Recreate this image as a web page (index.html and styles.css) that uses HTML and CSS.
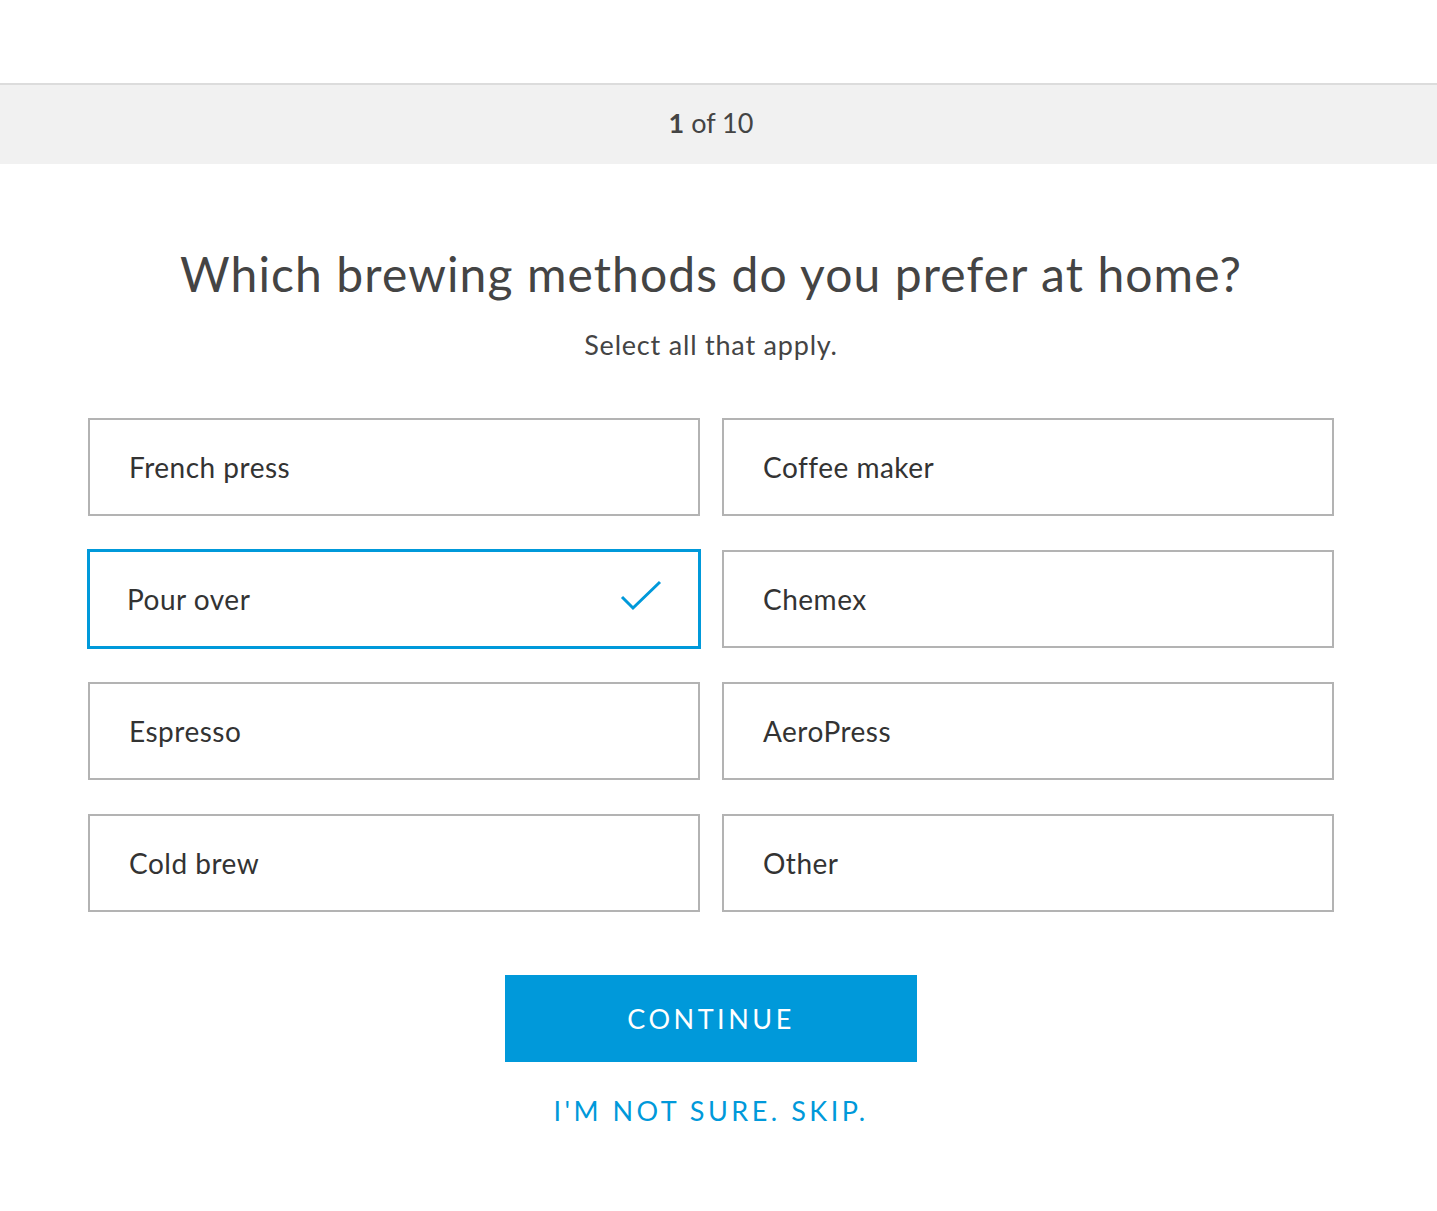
FILE: index.html
```html
<!DOCTYPE html>
<html>
  <head>
    <title>Brewing quiz</title>
    <link rel="stylesheet" href="styles.css">
  </head>
  <body>
    <header class="top"></header>
    <div class="progress">
      <div class="inner"><strong>1</strong> of 10</div>
    </div>

    <main class="quiz">
      <h1>Which brewing methods do you prefer at home?</h1>
      <p class="hint">Select all that apply.</p>

      <div class="options">
        <div class="option">French press</div>
        <div class="option">Coffee maker</div>
        <div class="option selected">
          Pour over
          <svg class="check" width="42" height="32" viewBox="0 0 42 32">
            <path d="M2 17 L13 28 L40 2" fill="none" stroke="#0099da" stroke-width="3"/>
          </svg>
        </div>
        <div class="option">Chemex</div>
        <div class="option">Espresso</div>
        <div class="option">AeroPress</div>
        <div class="option">Cold brew</div>
        <div class="option">Other</div>
      </div>

      <button class="continue">CONTINUE</button>
      <a class="skip" href="#">I'M NOT SURE. SKIP.</a>
    </main>
  </body>
</html>
```

FILE: styles.css
```css
body {
  margin: 0;
  font-family: Lato, "Open Sans", Arial, sans-serif;
  color: #444;
  background: #fff;
}

.top {
  height: 83px;
  border-bottom: 2px solid #dcdcdc;
}

.progress {
  background: #f1f1f1;
  height: 79px;
}

.progress .inner {
  padding-right: 15px;
  text-align: center;
  font-size: 27px;
  line-height: 75px;
  color: #444;
}

.progress strong {
  font-weight: 700;
}

.quiz {
  padding-right: 15px;
  display: flex;
  flex-direction: column;
  align-items: center;
}

h1 {
  margin: 80px 0 0;
  font-size: 48px;
  font-weight: 400;
  line-height: 60px;
  letter-spacing: 1.1px;
  color: #444;
}

.hint {
  margin: 23px 0 0;
  font-size: 27px;
  line-height: 36px;
  letter-spacing: 0.8px;
  color: #444;
}

.options {
  margin-top: 55px;
  width: 1246px;
  display: grid;
  grid-template-columns: 1fr 1fr;
  column-gap: 22px;
  row-gap: 34px;
}

.option {
  height: 98px;
  box-sizing: border-box;
  border: 2px solid #b3b3b3;
  padding: 0 40px 0 39px;
  display: flex;
  align-items: center;
  justify-content: space-between;
  font-size: 28px;
  letter-spacing: 0.5px;
  color: #333;
}

.option.selected {
  margin: -1px;
  height: 100px;
  border: 3px solid #0099da;
  padding-left: 37px;
  padding-right: 36px;
}

.check {
  margin-top: -6px;
}

.continue {
  margin-top: 63px;
  width: 412px;
  height: 87px;
  border: none;
  background: #0099da;
  color: #fff;
  font-family: inherit;
  font-size: 27px;
  letter-spacing: 3.5px;
  cursor: pointer;
}

.skip {
  margin-top: 32px;
  font-size: 27px;
  letter-spacing: 3.5px;
  color: #0099da;
  text-decoration: none;
}
```
